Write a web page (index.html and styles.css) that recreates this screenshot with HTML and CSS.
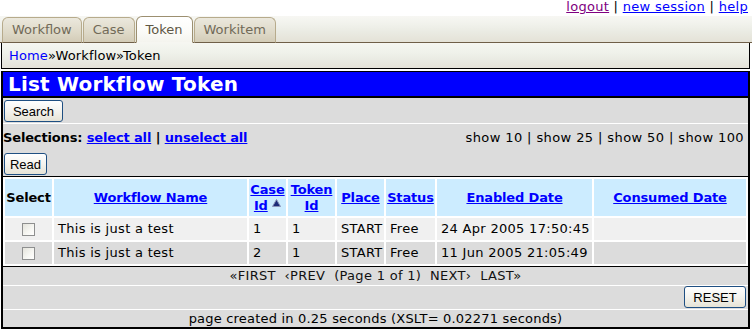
FILE: index.html
```html
<!DOCTYPE html>
<html lang="en">
<head>
  <meta charset="UTF-8" />
  <title>List Workflow Token</title>
  <link rel="stylesheet" href="styles.css">
</head>
<body>
  <div class="toplinks">
    <a href="#" class="visited">logout</a> | <a href="#">new session</a> | <a href="#">help</a>
  </div>

  <div class="tabs">
    <a href="#" class="tab">Workflow</a>
    <a href="#" class="tab">Case</a>
    <a href="#" class="tab active">Token</a>
    <a href="#" class="tab">Workitem</a>
  </div>

  <div class="crumb"><a href="#">Home</a>»Workflow»Token</div>

  <div class="main">
    <h1>List Workflow Token</h1>

    <div class="bar bar-line">
      <button class="btn btn-search">Search</button>
    </div>

    <div class="selections">
      <div class="sel-left">
        <b>Selections:</b> <a href="#">select all</a> <b>|</b> <a href="#">unselect all</a>
      </div>
      <div class="show">show 10 | show 25 | show 50 | show 100</div>
    </div>

    <div class="bar">
      <button class="btn btn-read">Read</button>
    </div>

    <table class="list">
      <thead>
        <tr>
          <th class="c-select">Select</th>
          <th class="c-name"><a href="#">Workflow Name</a></th>
          <th class="c-case"><a href="#">Case Id</a> <svg class="sort" width="9" height="8" viewBox="0 0 9 8"><polygon points="4.5,0.5 8.5,7.5 0.5,7.5" fill="#1b2a78" stroke="#8a94b8" stroke-width="1"/></svg></th>
          <th class="c-token"><a href="#">Token Id</a></th>
          <th class="c-place"><a href="#">Place</a></th>
          <th class="c-status"><a href="#">Status</a></th>
          <th class="c-enabled"><a href="#">Enabled Date</a></th>
          <th class="c-consumed"><a href="#">Consumed Date</a></th>
        </tr>
      </thead>
      <tbody>
        <tr class="odd">
          <td class="check"><span class="box"></span></td>
          <td>This is just a test</td>
          <td>1</td>
          <td>1</td>
          <td>START</td>
          <td>Free</td>
          <td>24 Apr 2005 17:50:45</td>
          <td></td>
        </tr>
        <tr class="even">
          <td class="check"><span class="box"></span></td>
          <td>This is just a test</td>
          <td>2</td>
          <td>1</td>
          <td>START</td>
          <td>Free</td>
          <td>11 Jun 2005 21:05:49</td>
          <td></td>
        </tr>
      </tbody>
    </table>

    <div class="pager">«FIRST&nbsp;&nbsp;‹PREV&nbsp;&nbsp;(Page 1 of 1)&nbsp;&nbsp;NEXT›&nbsp;&nbsp;LAST»</div>

    <div class="bar bar-right bar-line">
      <button class="btn btn-reset">RESET</button>
    </div>

    <div class="footer">page created in 0.25 seconds (XSLT= 0.02271 seconds)</div>
  </div>
</body>
</html>
```

FILE: styles.css
```css
body {
  margin: 0;
  font-family: "DejaVu Sans", Verdana, sans-serif;
  font-size: 13px;
  letter-spacing: 0.3px;
  color: #000;
  background: #fff;
}

a {
  color: #0000ff;
}

a.visited {
  color: #800080;
}

b {
  letter-spacing: -0.15px;
}

.toplinks {
  height: 16px;
  line-height: 14px;
  text-align: right;
  padding-right: 4px;
}

/* tab strip */
.tabs {
  display: flex;
  align-items: flex-end;
  height: 26px;
  padding-left: 2px;
  border-bottom: 1px solid #6f5f48;
  background: linear-gradient(#f7f7f3 0%, #f1f2ec 30%, #eaebe3 60%, #e4e2d7 100%);
}

.tab {
  display: block;
  box-sizing: border-box;
  height: 26px;
  margin-bottom: -1px;
  margin-right: 1px;
  padding: 0 9px;
  line-height: 24px;
  letter-spacing: 0;
  color: #716a58;
  text-decoration: none;
  border: 1px solid #b7ab8c;
  border-bottom-color: #6f5f48;
  border-radius: 6px 6px 0 0;
  background: linear-gradient(#ebe8dd 0%, #ded9c8 60%, #d3ccb7 100%);
}

.tab.active {
  height: 27px;
  line-height: 25px;
  color: #5e5745;
  border-color: #9c8f70;
  border-bottom-color: #f6f6f1;
  background: linear-gradient(#ffffff 0%, #fbfbf8 60%, #f4f4ee 100%);
}

.crumb {
  box-sizing: border-box;
  width: 749px;
  margin-left: 1px;
  height: 26px;
  line-height: 25px;
  padding-left: 7px;
  letter-spacing: 0.15px;
  border: 1px solid #000;
  border-top: none;
  background: linear-gradient(#f5f6f1 0%, #eff1ea 40%, #e9eae2 70%, #e4e2d8 100%);
}

.crumb a {
  text-decoration: none;
}

/* main panel */
.main {
  box-sizing: border-box;
  width: 749px;
  margin-left: 1px;
  border: 2px solid #000;
  border-top: none;
  background: #dcdcdc;
}

h1 {
  margin: 2px 0 0;
  height: 24px;
  line-height: 24px;
  padding-left: 5px;
  font-size: 20px;
  letter-spacing: 0.2px;
  color: #fff;
  background: #0000ff;
  border-top: 1px solid #000;
  border-bottom: 2px solid #000;
}

.bar {
  padding: 2px 1px 1px;
  line-height: 0;
}

.bar-line {
  border-bottom: 1px solid #fff;
}

.bar-right {
  text-align: right;
  padding: 0 2px 1px;
}

.btn {
  box-sizing: border-box;
  height: 22px;
  padding: 0;
  font-family: "Liberation Sans", Arial, sans-serif;
  font-size: 13px;
  letter-spacing: 0;
  color: #000;
  border: 1px solid #1f4f82;
  border-radius: 3px;
  background: linear-gradient(#ffffff 0%, #f4f3ee 50%, #e6e3d6 100%);
}

.btn-search { width: 59px; }
.btn-read { width: 43px; }
.btn-reset { width: 62px; }

.selections {
  display: flex;
  justify-content: space-between;
  height: 27px;
  line-height: 27px;
  padding: 0 4px 0 0;
}

.sel-left a {
  font-weight: bold;
  letter-spacing: -0.15px;
}

.show {
  letter-spacing: 0.4px;
}

/* token list */
.list {
  width: 745px;
  table-layout: fixed;
  border-collapse: separate;
  border-spacing: 2px;
  background: #fff;
  border-top: 1px solid #000;
  border-bottom: 1px solid #000;
}

.list th,
.list td {
  box-sizing: border-box;
  line-height: 16px;
}

.list th {
  height: 37px;
  padding: 2px 0;
  text-align: center;
  vertical-align: middle;
  letter-spacing: -0.15px;
  background: #ccecff;
}

.list td {
  height: 22px;
  padding: 3px 2px 3px 4px;
  text-align: left;
  white-space: nowrap;
}

.c-select { width: 47px; }
.c-name { width: 193px; }
.c-case { width: 37px; }
.c-token { width: 47px; }
.c-place { width: 47px; }
.c-status { width: 49px; }
.c-enabled { width: 155px; }
.c-consumed { width: 152px; }

.sort {
  vertical-align: top;
  margin-top: 1px;
}

.odd td {
  background: #f0f0f0;
}

.even td {
  background: #dcdcdc;
}

.list td.check {
  text-align: center;
  padding: 0;
}

.box {
  display: inline-block;
  box-sizing: border-box;
  width: 13px;
  height: 13px;
  vertical-align: middle;
  border: 1px solid #8e8f8f;
  background: linear-gradient(135deg, #e4e3dc 0%, #f7f7f3 60%, #ffffff 100%);
}

.pager {
  height: 18px;
  line-height: 18px;
  text-align: center;
  color: #111;
  border-bottom: 1px solid #fff;
}

.footer {
  height: 17px;
  line-height: 17px;
  text-align: center;
  letter-spacing: 0.2px;
}
```
